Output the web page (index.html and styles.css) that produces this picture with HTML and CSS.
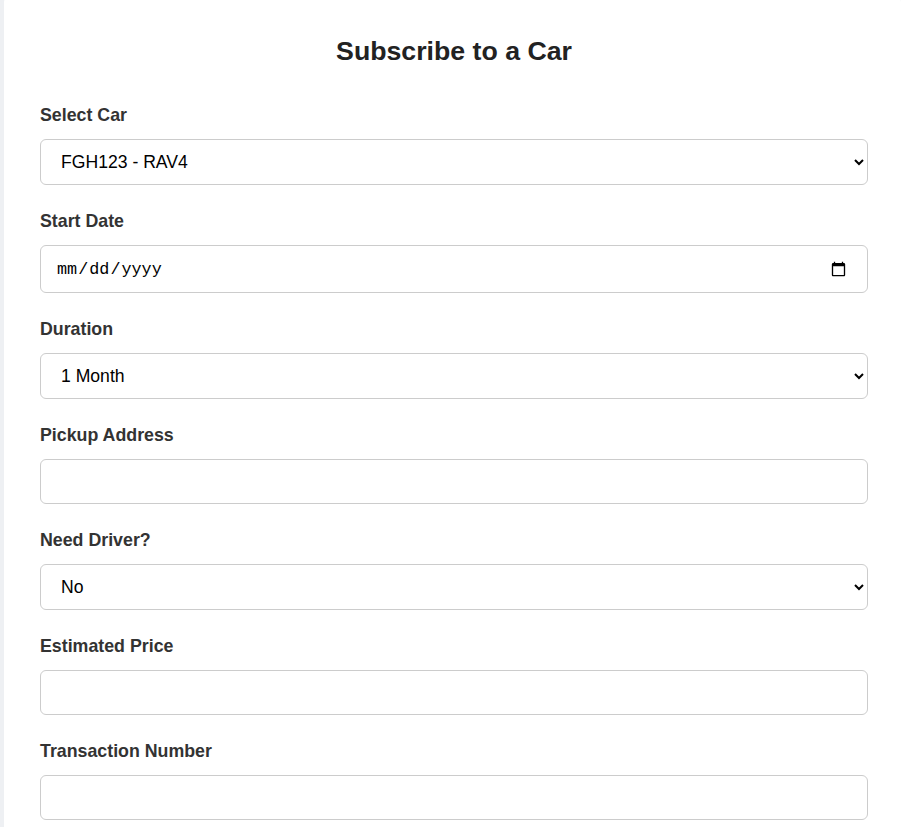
FILE: index.html
```html
<!DOCTYPE html>
<html lang="en">
<head>
<meta charset="utf-8">
<title>Subscribe to a Car</title>
<link rel="stylesheet" href="styles.css">
</head>
<body>
<div class="card">
  <h2 class="title">Subscribe to a Car</h2>
  <form class="form">
    <div class="field">
      <label class="label" for="car">Select Car</label>
      <select class="control select" id="car">
        <option>FGH123 - RAV4</option>
      </select>
    </div>
    <div class="field">
      <label class="label" for="start">Start Date</label>
      <input class="control date" type="date" id="start">
    </div>
    <div class="field">
      <label class="label" for="duration">Duration</label>
      <select class="control select" id="duration">
        <option>1 Month</option>
      </select>
    </div>
    <div class="field">
      <label class="label" for="pickup">Pickup Address</label>
      <input class="control text" type="text" id="pickup">
    </div>
    <div class="field">
      <label class="label" for="driver">Need Driver?</label>
      <select class="control select" id="driver">
        <option>No</option>
      </select>
    </div>
    <div class="field">
      <label class="label" for="price">Estimated Price</label>
      <input class="control text" type="text" id="price">
    </div>
    <div class="field">
      <label class="label" for="txn">Transaction Number</label>
      <input class="control text" type="text" id="txn">
    </div>
  </form>
</div>
</body>
</html>
```

FILE: styles.css
```css
html, body {
  margin: 0;
  padding: 0;
  overflow: hidden;
}

body {
  background: #eef0f3;
  font-family: "Liberation Sans", Arial, sans-serif;
  color: #333;
}

.card {
  margin: -8px 0 0 4px;
  padding: 44px 33px 40px 36px;
  background: #ffffff;
  border-radius: 11px;
}

.title {
  margin: 0 0 39px 0;
  font-size: 26.7px;
  line-height: 30px;
  font-weight: bold;
  text-align: center;
  color: #222;
}

.form {
  display: flex;
  flex-direction: column;
  gap: 26px;
}

.field {
  display: flex;
  flex-direction: column;
  gap: 14px;
}

.label {
  font-size: 17.8px;
  line-height: 20px;
  font-weight: bold;
  color: #333;
}

.control {
  box-sizing: border-box;
  width: 100%;
  margin: 0;
  border: 1px solid #cccccc;
  border-radius: 6px;
  background: #ffffff;
  color: #000;
  font-family: "Liberation Sans", Arial, sans-serif;
  font-size: 17.6px;
  outline: none;
}

.select {
  height: 46px;
  padding: 0 8px 0 16px;
}

.date {
  height: 48px;
  padding: 0 18px 0 15px;
  font-family: "Liberation Mono", "Courier New", monospace;
  font-size: 16.8px;
}

.text {
  height: 45px;
  padding: 0 12px;
}
```
